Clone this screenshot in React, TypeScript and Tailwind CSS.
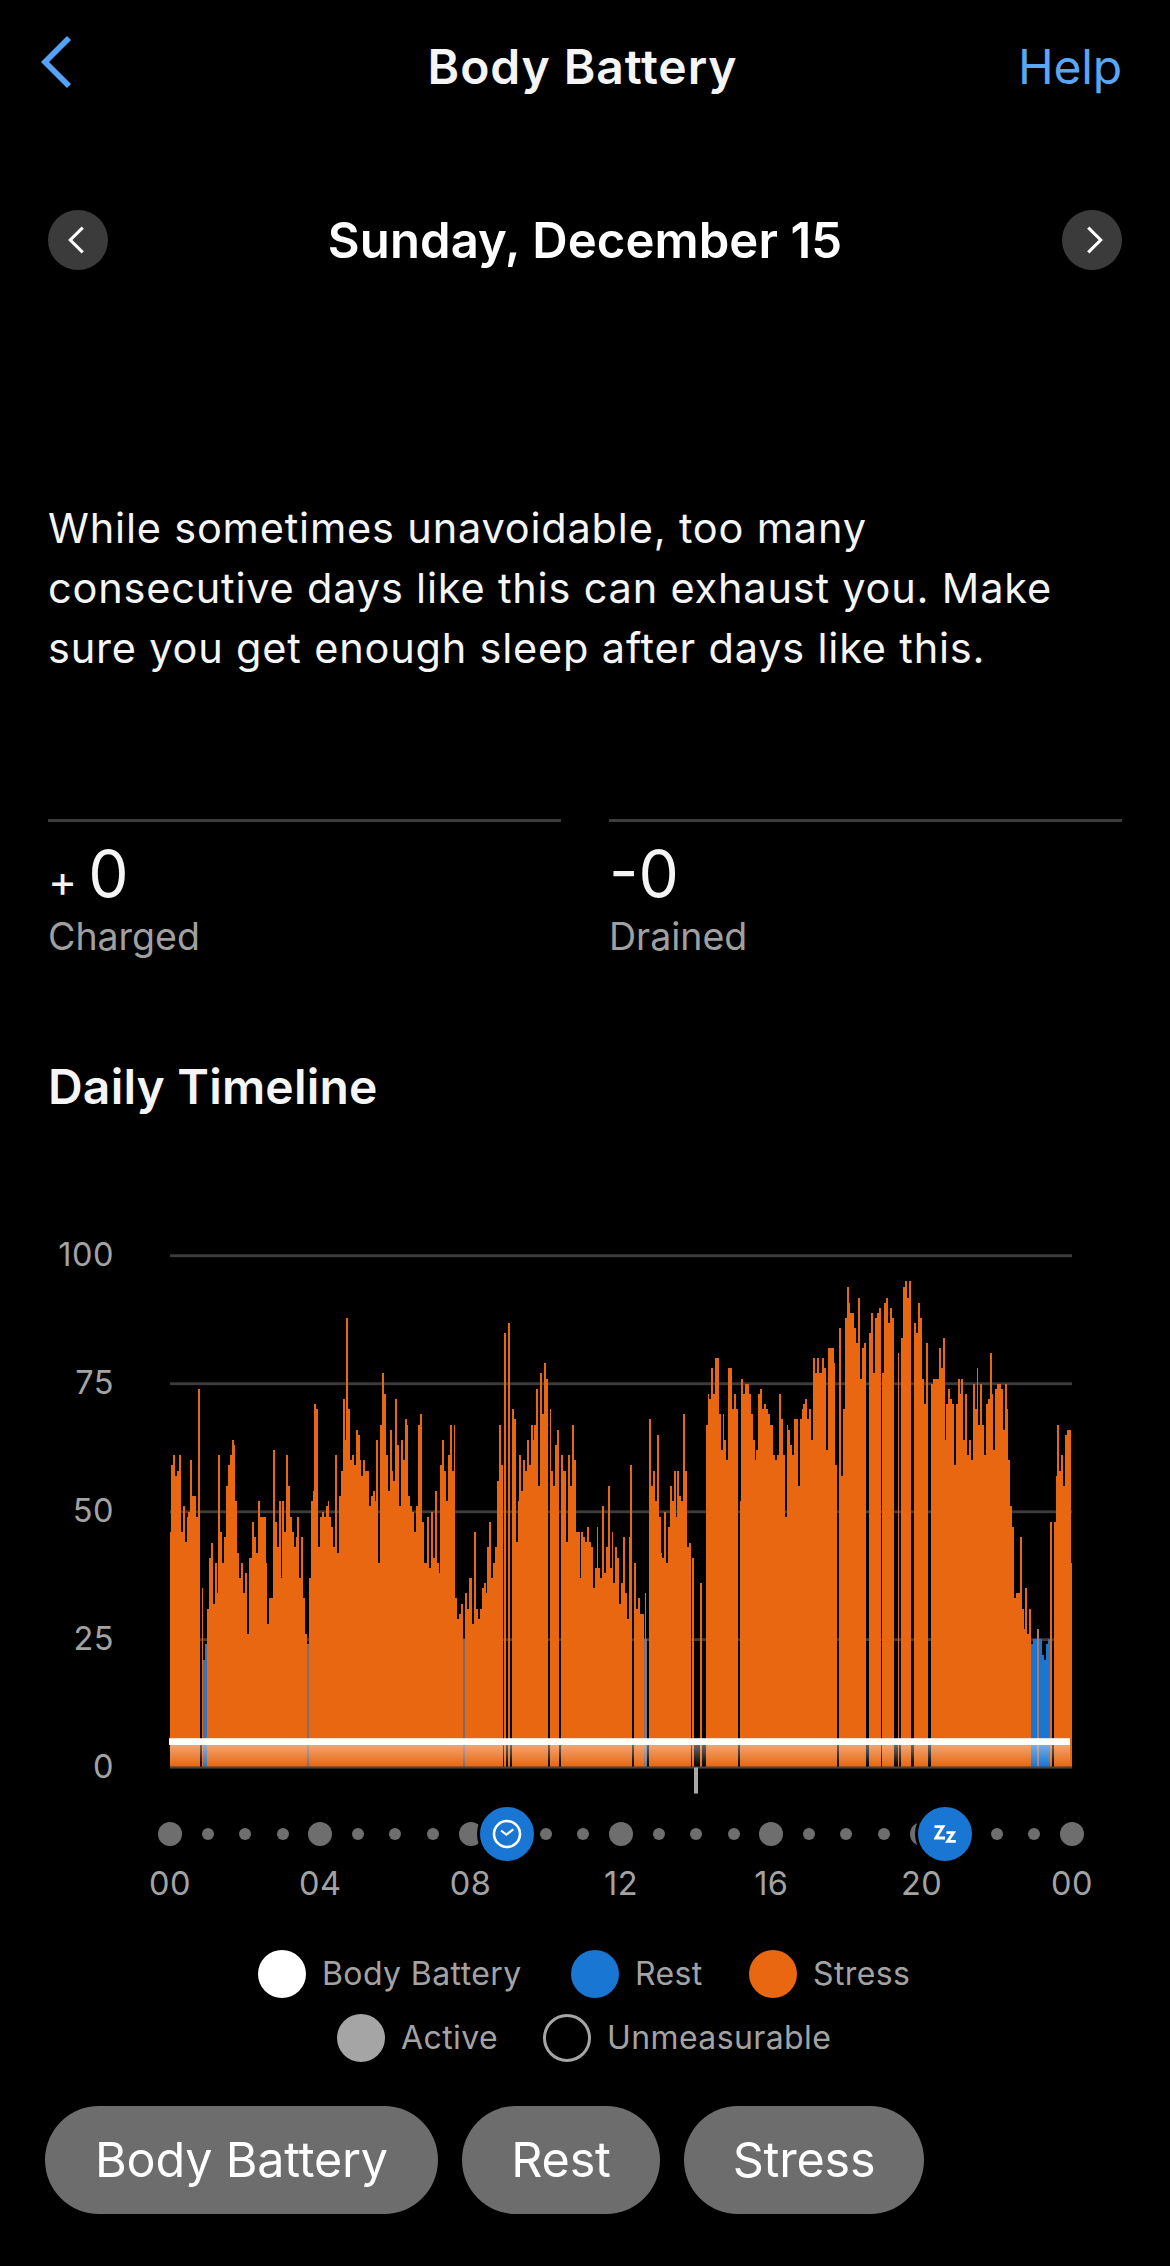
import React from "react";

// Stress samples as "x:y" steps; "-" opens a gap, a trailing letter selects a colour from COLORS.
// Coordinates are chart units (3 per pixel across, 2.8 per pixel down), x relative to the segment.
const SEGMENTS: { start: number; data: string }[] = [
  {
    start: 0,
    data: "0:846 3:658 9:631 15:689 21:676 27:631 33:846 39:773 45:874 51:804 54:790 60:644 66:745 78:804 84:446 90:- 96:1003 99:1205c 105:1160c 111:1062 117:918 123:875 129:1048 135:933 141:1017 144:631 150:846 156:933 162:860 168:717 174:658 180:631 186:589 192:603 195:760 201:903 207:975 213:933 219:1017 225:961 231:1132 237:918 246:818 252:860 258:903 264:760 270:804 288:933 291:1104 297:1031 309:617 315:818 321:888 327:760 333:975 336:760 342:846 348:631 354:717 360:804 366:846 372:888 378:860 381:804 387:975 393:860 399:1031 405:1132 410:1160g 417:975 423:760 429:732 432:488 438:502 444:888 450:804 456:790 462:804 468:773 473:760 477:804 483:832 489:888 495:631 501:903 507:745 513:676 519:474 525:589 528:245 534:502 540:644 546:631 552:658 558:560 564:574 570:644 573:689 579:644 585:676 597:773 603:745 609:732 615:760 618:589 624:933",
  },
  {
    start: 630,
    data: "0:547 6:401 12:460 18:631 24:732 30:560 36:676 39:703 45:474 51:603 57:773 63:589 69:644 75:530 81:547 84:745 90:773 96:790 102:846 108:773 114:547 120:516 126:818 132:933 141:804 147:946 153:790 159:918 165:732 171:933 177:961 180:658 186:589 192:676 198:760 204:631 210:547 216:676 222:547 225:1031 231:1090 237:1075 243:1048 249:1145g 255:1017 261:1062 267:975 276:1104 282:846 288:1062 294:1090 300:1062 306:1003 312:989 318:1017 321:888 327:818 333:975 339:933 345:888 351:703 357:547 363:658 369:- 372:289 378:- 384:259 390:- 396:502 402:530 408:874 414:760 417:631 423:732 429:644 435:676 441:589 447:658 453:547 459:589 462:547 468:446 474:717 480:401 486:516 492:373 498:418 504:- 510:502 513:676 519:717 525:603 531:560 537:- 543:631 549:676 558:874 564:631 570:717 576:547 582:644 588:846 600:975 603:846 609:860 615:874 621:832 627:874 633:888 639:1003 645:946 651:832 654:946 660:975 666:773 672:961 678:888 684:717",
  },
  {
    start: 1320,
    data: "0:946 6:846 9:989 15:888 21:918 27:1048 33:989 39:860 45:1017 51:1090 57:860 60:658 66:- 72:933 78:1062 84:1031 90:1075 102:1145g 105:1017 108:1145g 111:- 117:530 123:717 129:676 135:760 141:575 147:804 153:903 156:918 162:790 168:933 174:832 180:717 186:760 192:676 198:804 201:676 207:745 213:760 219:516 225:676 231:888 237:875 243:- 246:918 252:- 270:989 276:- 288:547 294:460 297:474 303:387 309:460 315:359 327:516 333:617 339:516 342:589 348:644 354:387 366:502 372:460 378:502 384:- 390:760 393:418 399:460 405:432 417:460 423:516 429:589 435:644 438:617 444:460 450:446 456:502 462:488 468:502 474:516 480:547 489:631 495:644 501:631 507:460 513:530 519:631 525:804 531:547 534:560 540:603 546:631 552:530 564:717 570:530 576:502 579:488 585:474 591:530 597:502 603:589 609:359 615:401 621:359 627:401 636:359 642:387 648:617 654:331 672:373 675:658 681:- 687:273",
  },
  {
    start: 2010,
    data: "3:689 9:502 15:245 21:160 27:203 30:231 42:273 48:317 54:189 60:418 66:331 72:317 78:- 87:289 93:231 99:401 105:245 111:231 117:217 123:- 126:401 132:203 138:189 144:259 150:217 156:245 162:- 174:345 177:- 183:303 189:160 195:144 201:189 207:144 213:- 222:259 228:289 234:203 240:245 246:418 252:488 258:317 264:- 273:432 279:418 297:331 303:387 309:303 315:589 318:488 324:446 330:474 336:488 342:658 348:488 354:418 360:460 363:418 369:589 375:460 381:631 387:589 393:644 399:432 405:502 411:387 414:547 420:432 426:547 432:631 438:488 444:474 450:345 456:460 459:617 465:446 471:432 483:446 489:560 495:432 501:502 504:644 510:773 516:832 522:1031 528:1017 540:860 546:1062 552:1118 555:1003 561:1132 567:1062 573:1160b 579:1146b 591:1118m 597:1146b 606:1190b 612:1205b 618:1160b 624:1146b 630:818 636:- 642:818 648:689 651:547 657:676 663:631 669:717 675:574 681:560 693:933 696:-",
  },
];

const COLORS: Record<string, string> = {
  o: "#e86710",
  b: "#1976d2",
  c: "#3a74b4",
  g: "#7b6b72",
  m: "#a87a70",
};

const BASE = 1505;

const steps = SEGMENTS.flatMap(({ start, data }) =>
  data.split(" ").map((item) => {
    const [x, v] = item.split(":");
    const kind = /[a-z]$/.test(v) ? v.slice(-1) : "o";
    return { x: start + Number(x), y: v === "-" ? null : parseInt(v, 10), kind };
  }),
);

const areas = Object.keys(COLORS).map((kind) => ({
  kind,
  d: steps
    .map((s, i) =>
      s.y !== null && s.kind === kind && steps[i + 1]
        ? `M${s.x} ${BASE}V${s.y}H${steps[i + 1].x}V${BASE}Z`
        : "",
    )
    .join(""),
}));

function Chart() {
  return (
    <svg
      className="block h-[560px] w-[904px] overflow-visible"
      viewBox="0 0 2712 1568"
      preserveAspectRatio="none"
    >
      <defs>
        <linearGradient id="fade" x1="0" y1="0" x2="0" y2="1">
          <stop offset="0" stopColor="#fff" stopOpacity="0.42" />
          <stop offset="1" stopColor="#fff" stopOpacity="0" />
        </linearGradient>
      </defs>
      {[72, 430.5, 789, 1147].map((y) => (
        <rect key={y} x="0" y={y - 4} width="2706" height="8" fill="#3c3c3c" />
      ))}
      {areas.map((a) => (
        <path key={a.kind} d={a.d} fill={COLORS[a.kind]} shapeRendering="crispEdges" />
      ))}
      <rect x="0" y="1502" width="2706" height="6" fill="#4a4340" />
      <rect x="0" y="1440" width="2700" height="62" fill="url(#fade)" />
      <rect x="-3" y="1423" width="2703" height="19" fill="#fff" />
      <rect x="1572" y="1505" width="12" height="73" fill="#a8a8a8" />
    </svg>
  );
}

function Chevron({ className, d, width }: { className: string; d: string; width: number }) {
  return (
    <svg className={className} viewBox="0 0 32 54" fill="none" stroke="currentColor" strokeWidth={width}>
      <path d={d} />
    </svg>
  );
}

function TimeDots() {
  return (
    <div className="relative ml-[158px] mt-[17px] flex h-[54px] w-[926px] items-center justify-between">
      {Array.from({ length: 25 }, (_, i) => (
        <div key={i} className="flex w-6 justify-center">
          <div className={i % 4 === 0 ? "size-6 rounded-full bg-[#6e6e6e]" : "size-3 rounded-full bg-[#6e6e6e]"} />
        </div>
      ))}
      <div className="absolute left-[318.5px] top-[-3px] flex size-[60px] items-center justify-center rounded-full border-[3px] border-black bg-[#1976d2]">
        <svg className="size-[30px]" viewBox="0 0 30 30" fill="none" stroke="#fff">
          <circle cx="15" cy="15" r="13" strokeWidth="2.6" />
          <path d="M9 11.5 14.3 15.7 21.3 10.3" strokeWidth="2.2" />
        </svg>
      </div>
      <div className="absolute left-[756.5px] top-[-3px] flex size-[60px] items-center justify-center rounded-full border-[3px] border-black bg-[#1976d2]">
        <svg className="h-[18px] w-[22px]" viewBox="0 0 22 18" fill="none" stroke="#fff" strokeWidth="2.8">
          <path d="M0.5 1.6H9L1.8 13H11" />
          <path d="M12.5 7.6H19.5L13.6 16.4H21.8" />
        </svg>
      </div>
    </div>
  );
}

function LegendItem({ dot, label, text }: { dot: string; label: string; text: string }) {
  return (
    <div className="flex items-center gap-4">
      <div className={`size-12 rounded-full ${dot}`} />
      <span
        className={`whitespace-nowrap text-[32px] leading-none tracking-[0.4px] text-[#a3a3a3] ${text}`}
      >
        {label}
      </span>
    </div>
  );
}

function Chip({ label, className }: { label: string; className: string }) {
  return (
    <button
      className={`h-[108px] rounded-[54px] bg-[#6d6d6d] text-center text-[48.5px] tracking-[-0.2px] text-white ${className}`}
    >
      {label}
    </button>
  );
}

export default function App() {
  return (
    <main className="flex h-[2266px] w-[1170px] flex-col overflow-hidden bg-black font-['Inter',sans-serif] text-[#f5f5f5]">
      <header className="flex h-[134px] items-center justify-between pl-10 pr-12">
        <Chevron className="mb-[10px] h-[54px] w-8 text-[#55a3f8]" d="M29 3 5 27 29 51" width={5.7} />
        <h1 className="ml-[75px] text-[48px] font-semibold tracking-[0.9px]">Body Battery</h1>
        <a className="text-[48px] tracking-[-0.2px] text-[#5aa6f5]">Help</a>
      </header>

      <section className="mt-[76px] flex h-[60px] items-center justify-between px-12">
        <button className="flex size-[60px] items-center justify-center rounded-full bg-[#3b3b3b] text-white">
          <Chevron className="mr-1 h-7 w-[17px]" d="M28 3 4 27 28 51" width={6} />
        </button>
        <h2 className="mt-[2px] text-[49px] font-semibold tracking-[0.1px] text-white">Sunday, December 15</h2>
        <button className="flex size-[60px] items-center justify-center rounded-full bg-[#3b3b3b] text-white">
          <Chevron className="ml-1 h-7 w-[17px]" d="M4 3 28 27 4 51" width={6} />
        </button>
      </section>

      <p className="ml-12 mt-[228px] whitespace-nowrap text-[41.5px] leading-[60px] tracking-[0.8px]">
        While sometimes unavoidable, too many
        <br />
        consecutive days like this can exhaust you. Make
        <br />
        sure you get enough sleep after days like this.
      </p>

      <section className="mx-12 mt-[141px] grid grid-cols-2 gap-12">
        <div className="border-t-[3px] border-[#3c3c3c] pt-5">
          <div className="flex h-[64px] items-baseline gap-[11px] leading-[64px]">
            <span className="text-[44px]">+</span>
            <span className="text-[64px]">0</span>
          </div>
          <div className="mt-[9px] text-[37.5px] leading-[44px] text-[#a0a0a0]">Charged</div>
        </div>
        <div className="border-t-[3px] border-[#3c3c3c] pt-5">
          <div className="h-[64px] text-[64px] leading-[64px]">-0</div>
          <div className="mt-[9px] text-[37.5px] leading-[44px] text-[#a0a0a0]">Drained</div>
        </div>
      </section>

      <h3 className="ml-12 mt-[98px] text-[48px] font-semibold leading-[60px] tracking-[0.2px]">Daily Timeline</h3>

      <section className="mt-[113px] flex">
        <div className="flex h-[560px] w-[114px] flex-col items-end text-[32.5px] leading-8 tracking-[0.5px] text-[#a3a3a3]">
          <span className="mt-[9px] h-32">100</span>
          <span className="h-32">75</span>
          <span className="h-32">50</span>
          <span className="h-32">25</span>
          <span>0</span>
        </div>
        <div className="ml-14">
          <Chart />
        </div>
      </section>

      <TimeDots />

      <div className="ml-[140px] mt-px flex w-[962px] justify-between text-[32.5px] leading-[44px] tracking-[0.5px] text-[#a3a3a3]">
        {["00", "04", "08", "12", "16", "20", "00"].map((t, i) => (
          <span key={i} className="w-[60px] text-center">{t}</span>
        ))}
      </div>

      <section className="mt-11 flex flex-col gap-4">
        <div className="ml-[258px] flex gap-[46px]">
          <LegendItem dot="bg-white" label="Body Battery" text="w-[203px]" />
          <LegendItem dot="bg-[#1976d2]" label="Rest" text="w-[68px]" />
          <LegendItem dot="bg-[#e86710]" label="Stress" text="w-[98px]" />
        </div>
        <div className="ml-[337px] flex gap-[46px]">
          <LegendItem dot="bg-[#a5a5a5]" label="Active" text="w-[96px]" />
          <LegendItem dot="border-[3px] border-[#a5a5a5]" label="Unmeasurable" text="" />
        </div>
      </section>

      <nav className="ml-[45px] mt-11 flex gap-6">
        <Chip label="Body Battery" className="w-[393px]" />
        <Chip label="Rest" className="w-[198px]" />
        <Chip label="Stress" className="w-[240px]" />
      </nav>
    </main>
  );
}
